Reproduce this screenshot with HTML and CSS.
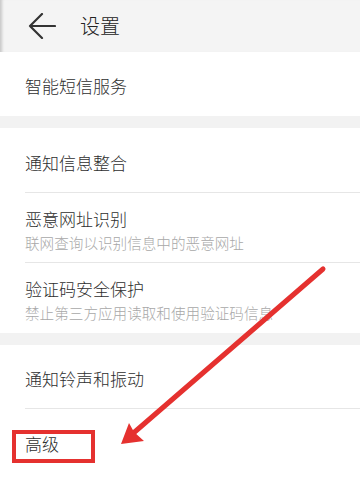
FILE: index.html
```html
<!DOCTYPE html>
<html lang="zh">
<head>
<meta charset="utf-8">
<title>设置</title>
<link rel="stylesheet" href="styles.css">
</head>
<body>
<div class="page">
  <header class="header">
    <svg class="back" width="28" height="26" viewBox="0 0 28 26">
      <path d="M2 13 H27 M14 1 L2 13 L14 25" fill="none" stroke="#333" stroke-width="2.2" stroke-linecap="round" stroke-linejoin="round"/>
    </svg>
    <span class="title">设置</span>
  </header>

  <section class="card">
    <div class="item h64"><span class="label">智能短信服务</span></div>
  </section>
  <div class="gap"></div>

  <section class="card">
    <div class="item h65 divided"><span class="label">通知信息整合</span></div>
    <div class="item h70 divided">
      <span class="label">恶意网址识别</span>
      <span class="sub">联网查询以识别信息中的恶意网址</span>
    </div>
    <div class="item h70">
      <span class="label">验证码安全保护</span>
      <span class="sub">禁止第三方应用读取和使用验证码信息</span>
    </div>
  </section>
  <div class="gap"></div>

  <section class="card grow">
    <div class="item h64 divided"><span class="label">通知铃声和振动</span></div>
    <div class="item h66"><span class="label">高级</span></div>
  </section>

  <svg class="annot" width="360" height="494" viewBox="0 0 360 494">
    <line x1="323" y1="269" x2="130" y2="436" stroke="#e5312f" stroke-width="5" stroke-linecap="round"/>
    <polygon points="121,444 129,423 134,432 144,441" fill="#e5312f"/>
  </svg>
  <div class="highlight"></div>
</div>
</body>
</html>
```
FILE: styles.css
```css
html, body {
  margin: 0;
  padding: 0;
  background: #ffffff;
}
body {
  font-family: "Noto Sans CJK SC", "Noto Sans", sans-serif;
}
.page {
  position: relative;
  width: 360px;
  height: 494px;
  overflow: hidden;
  display: flex;
  flex-direction: column;
  box-shadow: inset 3px 0 2px -1px rgba(0, 0, 0, 0.08);
}
.header {
  height: 52px;
  flex: none;
  background: #f4f4f4;
  display: flex;
  align-items: center;
  padding-left: 28px;
  box-shadow: inset 4px 0 3px -2px rgba(0, 0, 0, 0.18);
}
.back {
  display: block;
}
.title {
  margin-left: 24px;
  font-size: 20px;
  font-weight: 300;
  color: #222;
  line-height: 1;
}
.card {
  background: #fff;
  flex: none;
}
.card.grow {
  flex: 1;
}
.gap {
  height: 12px;
  flex: none;
  background: #f2f2f2;
}
.item {
  position: relative;
  display: flex;
  flex-direction: column;
  justify-content: center;
  padding-left: 25px;
  box-sizing: border-box;
}
.item.divided::after {
  content: "";
  position: absolute;
  left: 25px;
  right: 0;
  bottom: 0;
  height: 1px;
  background: #e6e6e6;
}
.h64 { height: 64px; }
.h65 { height: 65px; }
.h66 { height: 66px; }
.h70 { height: 70px; }
.label {
  font-size: 17px;
  font-weight: 300;
  line-height: 22px;
  color: #2e2e2e;
  padding-top: 4px;
}
.sub {
  font-size: 14.6px;
  font-weight: 300;
  line-height: 20px;
  color: #a8a8a8;
  margin-top: 3px;
}
.annot {
  position: absolute;
  left: 0;
  top: 0;
  pointer-events: none;
}
.highlight {
  position: absolute;
  left: 12px;
  top: 430px;
  width: 83px;
  height: 33px;
  box-sizing: border-box;
  border: 4px solid #e5312f;
}
```
